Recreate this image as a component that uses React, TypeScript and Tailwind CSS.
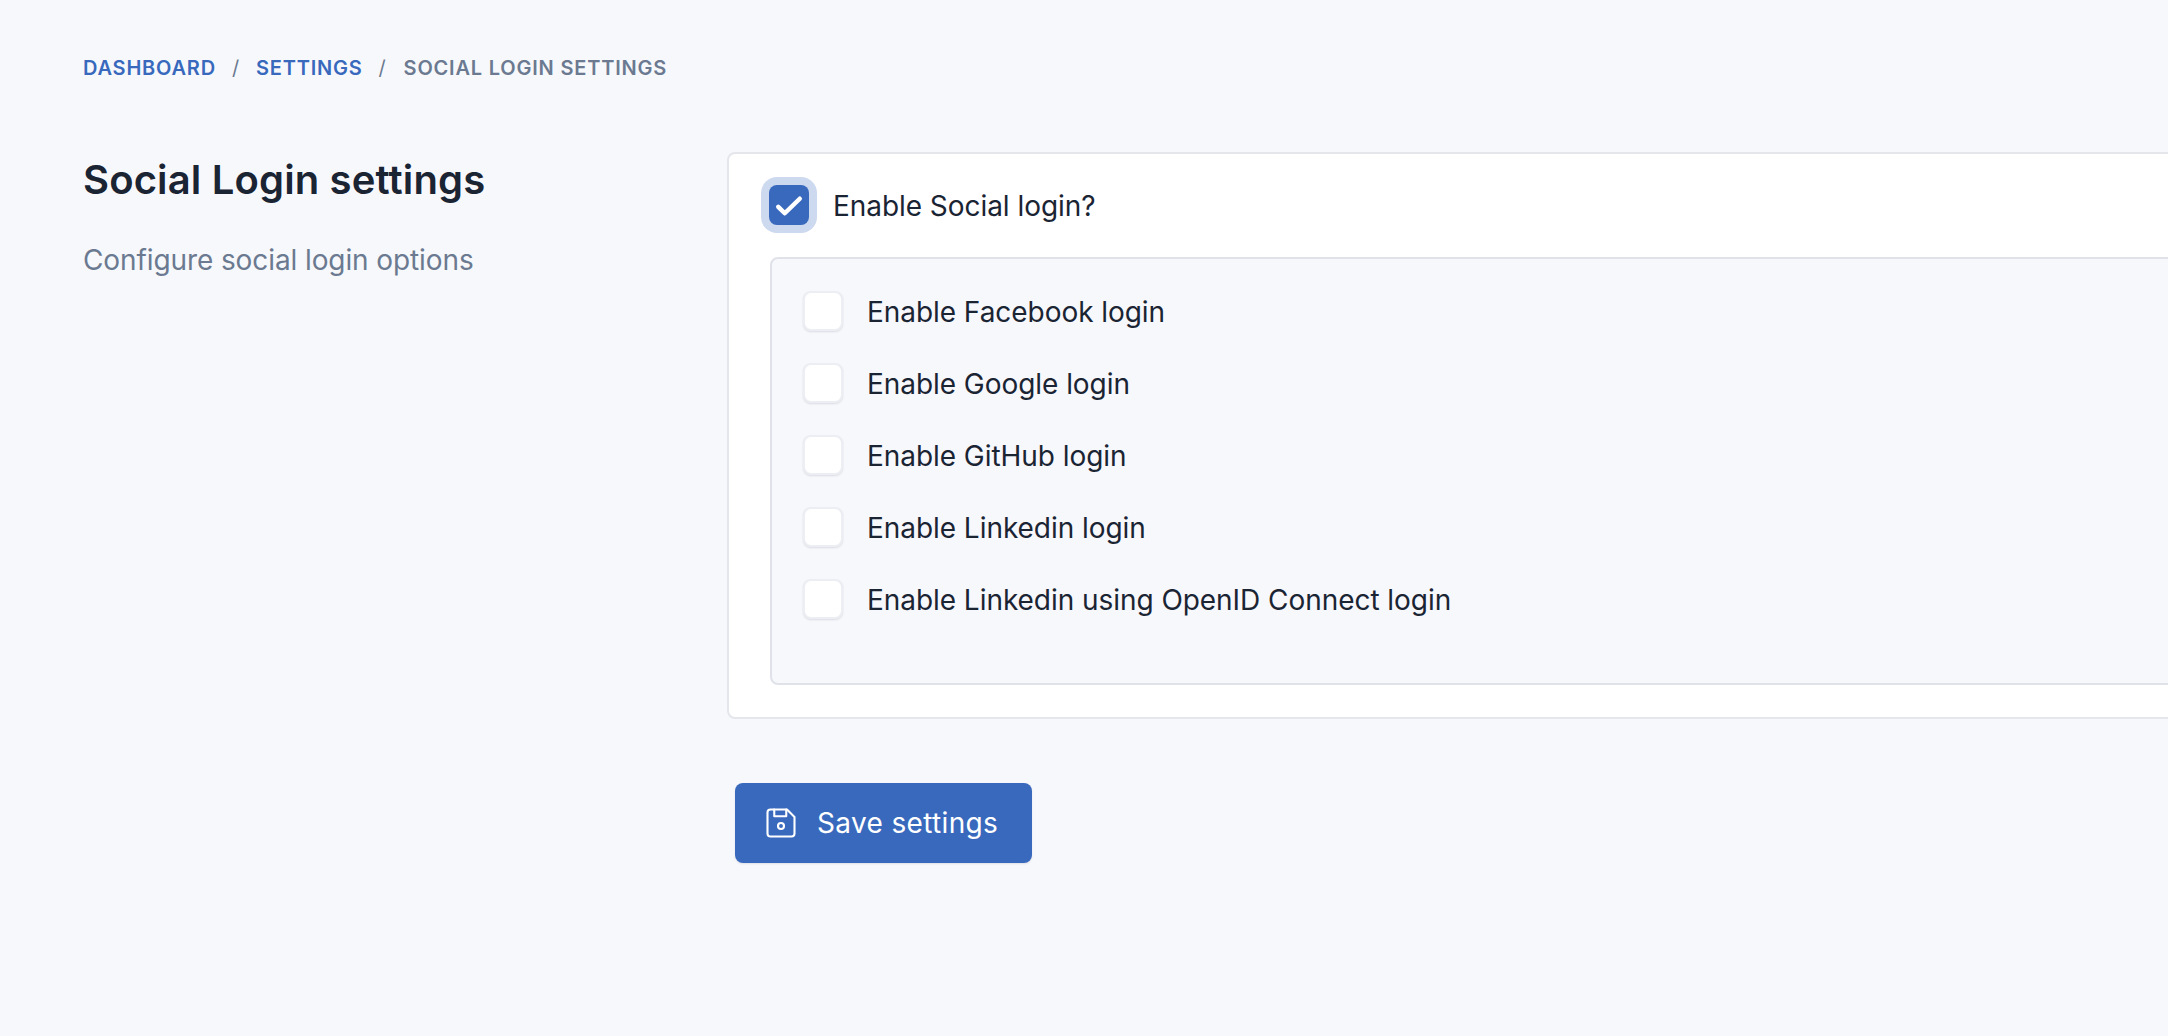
import React from 'react';

const SaveIcon = () => (
  <svg width="36" height="36" viewBox="0 0 24 24" fill="none" stroke="currentColor" strokeWidth="1.4" strokeLinecap="round" strokeLinejoin="round" className="shrink-0">
    <path d="M3 5a2 2 0 0 1 2-2h11l5 5v11a2 2 0 0 1-2 2H5a2 2 0 0 1-2-2z" />
    <path d="M7.5 3v4.5h8V3" />
    <circle cx="12" cy="14" r="2" />
  </svg>
);

const options = [
  'Enable Facebook login',
  'Enable Google login',
  'Enable GitHub login',
  'Enable Linkedin login',
  'Enable Linkedin using OpenID Connect login',
];

const App: React.FC = () => (
  <div className="w-[2168px] h-[1036px] overflow-hidden bg-[#f7f8fc] font-['Inter',sans-serif] text-[#1a2433]">
    <div className="pl-[83px] pt-[57px]">
      <nav className="flex items-center h-[22px] text-[20px] font-semibold uppercase tracking-[0.8px]">
        <span className="text-[#3869bd]">Dashboard</span>
        <span className="mx-[16px] font-normal text-[#6b7a90]">/</span>
        <span className="text-[#3869bd]">Settings</span>
        <span className="mx-[16px] font-normal text-[#6b7a90]">/</span>
        <span className="text-[#6b7a90] ml-[1px]">Social Login Settings</span>
      </nav>

      <div className="flex mt-[73px]">
        <div className="w-[644px] shrink-0">
          <h1 className="text-[40px] leading-[56px] font-semibold tracking-[0.15px]">Social Login settings</h1>
          <p className="mt-[32px] text-[28px] leading-[40px] font-[380] tracking-[-0.1px] text-[#6b7a90]">Configure social login options</p>
        </div>

        <div className="w-[1700px] shrink-0">
          <div className="bg-white border-2 border-[#e4e6ec] rounded-[8px] pl-[32px] pt-[23px] pb-[32px]">
            <label className="flex items-center h-[56px] pl-[8px]">
              <span className="flex items-center justify-center w-[40px] h-[40px] rounded-[8px] bg-[#3869bd] ring-[8px] ring-[#cdd9ef] shrink-0">
                <svg width="30" height="30" viewBox="0 0 24 24" fill="none" stroke="white" strokeWidth="3.6" strokeLinecap="round" strokeLinejoin="round">
                  <path d="M3.4 13.5L8.6 18.6L20.6 7" />
                </svg>
              </span>
              <span className="ml-[24px] text-[28px] leading-[40px] font-[380] tracking-[-0.05px] pt-[1px]">Enable Social login?</span>
            </label>

            <div className="mt-[24px] ml-[9px] bg-[#f7f8fc] border-2 border-[#e0e2ea] rounded-[8px] pl-[31px] pt-[32px] pb-[64px]">
              <div className="flex flex-col gap-[32px]">
                {options.map((label) => (
                  <label key={label} className="flex items-center h-[40px]">
                    <span className="w-[40px] h-[40px] bg-white border-2 border-[#eceef3] rounded-[8px] shadow-[0_1px_2px_rgba(16,24,40,0.12)] shrink-0" />
                    <span className="ml-[24px] text-[28px] leading-[40px] font-[380] tracking-[-0.05px] pt-[1px]">{label}</span>
                  </label>
                ))}
              </div>
            </div>
          </div>

          <button className="flex items-center mt-[64px] ml-[8px] h-[80px] w-[297px] pl-[28px] gap-[18px] bg-[#3869bd] text-white text-[28px] font-[380] tracking-[0.35px] rounded-[8px] shadow-[0_1px_2px_rgba(16,24,40,0.1)]">
            <SaveIcon />
            Save settings
          </button>
        </div>
      </div>
    </div>
  </div>
);

export default App;
